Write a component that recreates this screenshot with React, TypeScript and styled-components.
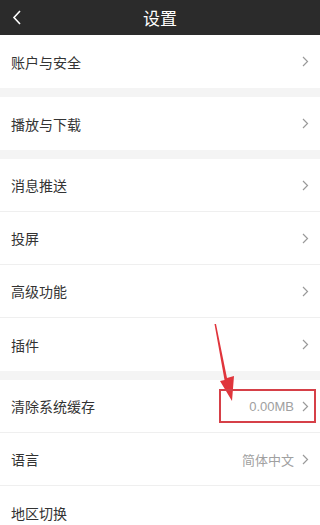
import styled, { createGlobalStyle } from 'styled-components';
import { FC } from 'react';

const GlobalStyle = createGlobalStyle`
  html, body {
    margin: 0;
    padding: 0;
    background: #f4f4f4;
  }
  body {
    font-family: "Noto Sans CJK SC", "Noto Sans", sans-serif;
  }
`;

const Page = styled.div`
  position: relative;
  width: 320px;
  height: 525px;
  overflow: hidden;
  background: #f4f4f4;
`;

const Header = styled.header`
  height: 35px;
  background: #2b2b2b;
  display: flex;
  align-items: center;
  justify-content: center;
  position: relative;
  color: #fff;
  font-size: 17px;
`;

const BackButton = styled.span`
  position: absolute;
  left: 12px;
  top: 10px;
  display: flex;
`;

const Group = styled.section`
  background: #fff;
  margin-bottom: 9px;
`;

const Row = styled.div`
  height: 52px;
  display: flex;
  align-items: center;
  padding: 0 11px 0 11px;
  border-bottom: 1px solid #efefef;

  &:last-child {
    border-bottom: none;
    height: 53px;
  }
`;

const Label = styled.span`
  flex: 1;
  font-size: 14px;
  color: #333;
`;

const Value = styled.span`
  font-size: 13px;
  color: #a0a0a0;
  margin-right: 8px;
  font-family: "Liberation Sans", "Noto Sans CJK SC", sans-serif;
`;

const Chevron: FC = () => (
  <svg width="7" height="11" viewBox="0 0 7 11">
    <path d="M1 1 L5.5 5.5 L1 10" fill="none" stroke="#9a9a9a" strokeWidth="1.2" />
  </svg>
);

const Highlight = styled.div`
  position: absolute;
  left: 219px;
  top: 389px;
  width: 97px;
  height: 34px;
  border: 2px solid #d64048;
  box-sizing: border-box;
`;

const Arrow = styled.svg`
  position: absolute;
  left: 200px;
  top: 320px;
`;

interface ItemProps {
  label: string;
  value?: string;
  chevron?: boolean;
}

const Item: FC<ItemProps> = ({ label, value, chevron = true }) => (
  <Row>
    <Label>{label}</Label>
    {value && <Value>{value}</Value>}
    {chevron && <Chevron />}
  </Row>
);

export default function App() {
  return (
    <Page>
      <GlobalStyle />
      <Header>
        <BackButton>
          <svg width="10" height="15" viewBox="0 0 10 15">
            <path d="M8 1 L2 7.5 L8 14" fill="none" stroke="#fff" strokeWidth="1.6" />
          </svg>
        </BackButton>
        设置
      </Header>
      <Group>
        <Item label="账户与安全" />
      </Group>
      <Group>
        <Item label="播放与下载" />
      </Group>
      <Group>
        <Item label="消息推送" />
        <Item label="投屏" />
        <Item label="高级功能" />
        <Item label="插件" />
      </Group>
      <Group>
        <Item label="清除系统缓存" value="0.00MB" />
        <Item label="语言" value="简体中文" />
        <Item label="地区切换" chevron={false} />
      </Group>
      <Arrow width="40" height="90" viewBox="0 0 40 90">
        <path d="M14.5 4 L16 4 L27 58 L34 56 L32 81 L20 61 L24.5 60 Z" fill="#e0353c" />
      </Arrow>
      <Highlight />
    </Page>
  );
}
